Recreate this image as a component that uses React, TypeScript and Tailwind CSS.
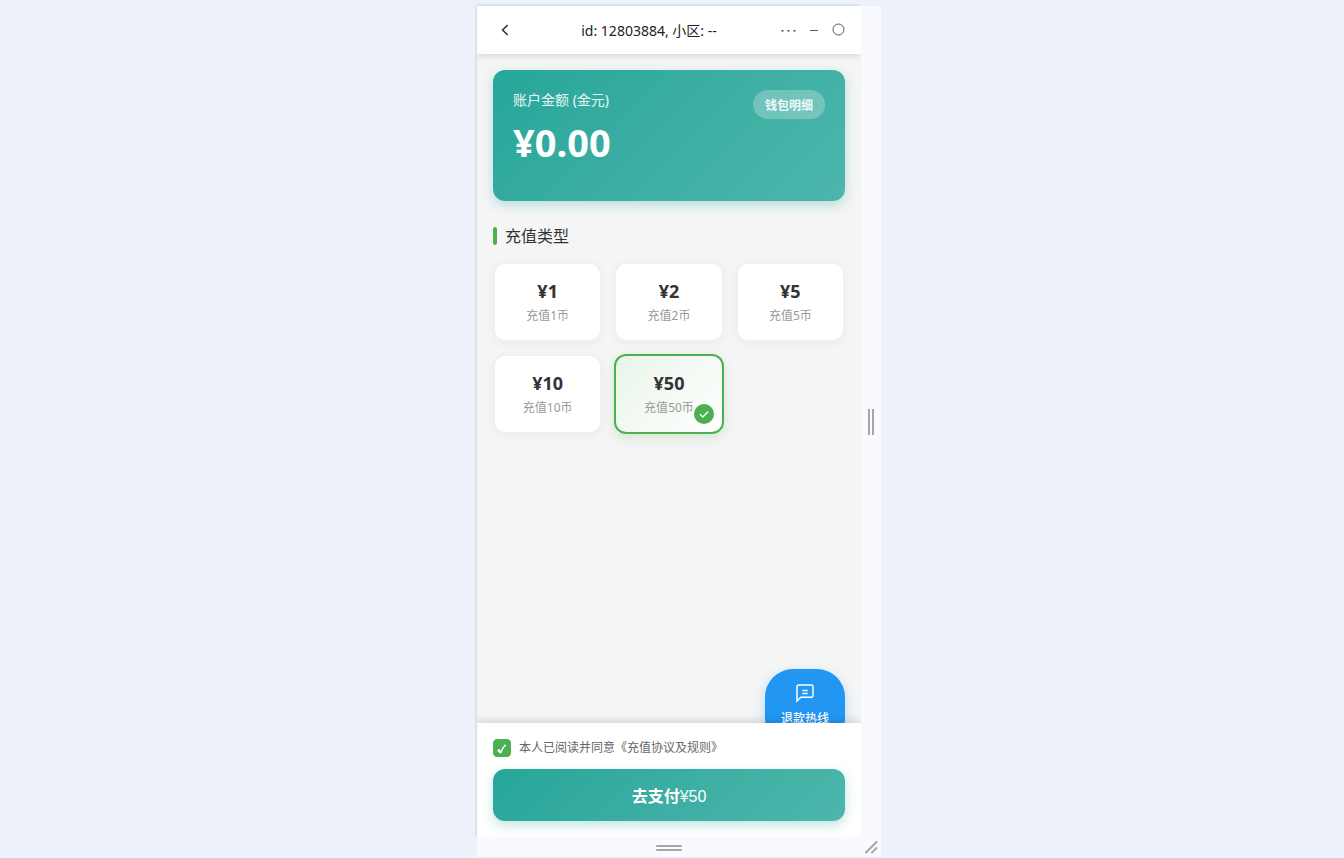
import { useState } from "react";

interface RechargeOption {
  price: number;
  coins: number;
}

const OPTIONS: RechargeOption[] = [
  { price: 1, coins: 1 },
  { price: 2, coins: 2 },
  { price: 5, coins: 5 },
  { price: 10, coins: 10 },
  { price: 50, coins: 50 },
];

function Header() {
  return (
    <header className="relative z-10 flex h-12 shrink-0 items-center justify-between bg-white px-4 shadow-[0_2px_6px_rgba(0,0,0,0.12)]">
      <button type="button" aria-label="返回" className="flex size-6 items-center justify-center text-[#333]">
        <svg viewBox="0 0 24 24" className="size-6" fill="none" stroke="currentColor" strokeWidth="1.6">
          <path d="M14.6 7 9.6 12l5 5" />
        </svg>
      </button>
      <h1 className="pt-0.5 text-sm leading-5 whitespace-nowrap text-[#222]">
        id: 12803884, 小区: --
      </h1>
      <div className="flex w-16 items-center justify-between text-[#555]">
        <button type="button" aria-label="更多">
          <svg viewBox="0 0 15 16" className="h-4 w-[15px]" fill="currentColor">
            <rect x="0.5" y="8" width="2" height="1.6" />
            <rect x="6.5" y="8" width="2" height="1.6" />
            <rect x="12.5" y="8" width="2" height="1.6" />
          </svg>
        </button>
        <button type="button" aria-label="最小化">
          <svg viewBox="0 0 8 16" className="h-4 w-2" fill="currentColor">
            <rect x="0" y="8" width="8" height="1" />
          </svg>
        </button>
        <button type="button" aria-label="关闭">
          <svg viewBox="0 0 13 16" className="h-4 w-[13px]" fill="none" stroke="currentColor">
            <circle cx="6.5" cy="7.5" r="5.5" />
          </svg>
        </button>
      </div>
    </header>
  );
}

function BalanceCard() {
  return (
    <section className="flex h-[131px] items-start justify-between rounded-xl bg-linear-135 from-[#26a69a] to-[#4db6ac] p-5 text-white shadow-[0_4px_12px_rgba(38,166,154,0.3)]">
      <div>
        <p className="text-sm leading-5 text-white/90">账户金额 (金元)</p>
        <p className="mt-2 text-[38px] leading-[48px] font-bold">¥0.00</p>
      </div>
      <button type="button" className="rounded-full bg-white/25 px-3 pt-[7px] pb-[5px] text-xs leading-[17px] font-semibold text-white/90">
        钱包明细
      </button>
    </section>
  );
}

interface OptionCardProps {
  option: RechargeOption;
  selected: boolean;
  onSelect: () => void;
}

function OptionCard({ option, selected, onSelect }: OptionCardProps) {
  return (
    <button
      type="button"
      aria-pressed={selected}
      onClick={onSelect}
      className={`relative flex h-20 flex-col items-center justify-center rounded-xl border-2 ${
        selected
          ? "border-[#4caf50] bg-linear-135 from-[#e8f5e9] to-white shadow-[0_4px_12px_rgba(76,175,80,0.2)]"
          : "border-[#f0f0f0] bg-white shadow-[0_2px_8px_rgba(0,0,0,0.04)]"
      }`}
    >
      <span className="text-lg leading-6 font-bold text-[#333]">¥{option.price}</span>
      <span className="mt-1 text-xs leading-[18px] text-[#999]">充值{option.coins}币</span>
      {selected && (
        <span className="absolute right-2 bottom-2 flex size-5 items-center justify-center rounded-full bg-[#4caf50]">
          <svg viewBox="0 0 20 20" className="size-5" fill="none" stroke="#fff" strokeWidth="1.4">
            <path d="m6 10.2 2.8 2.8 5.4-5.6" />
          </svg>
        </span>
      )}
    </button>
  );
}

function HotlineButton() {
  return (
    <button
      type="button"
      className="absolute right-4 -bottom-6 flex h-[78px] w-20 flex-col items-center rounded-[28px] bg-[#2196f3] pt-3.5 text-white shadow-[0_4px_12px_rgba(33,150,243,0.3)]"
    >
      <svg viewBox="0 0 20 20" className="size-5" fill="none" stroke="currentColor" strokeWidth="1.5">
        <path d="M2 18V3.6C2 2.6 2.6 2 3.6 2h12.8c1 0 1.6.6 1.6 1.6v9c0 1-.6 1.6-1.6 1.6H5.8Z" />
        <path d="M7.4 7.4h5.2M7.4 10.6h5.2" />
      </svg>
      <span className="mt-2 text-xs leading-4 font-medium">退款热线</span>
    </button>
  );
}

interface PayBarProps {
  price: number;
  agreed: boolean;
  onAgree: (agreed: boolean) => void;
}

function PayBar({ price, agreed, onAgree }: PayBarProps) {
  return (
    <footer className="relative z-10 shrink-0 bg-white p-4 shadow-[0_-2px_8px_rgba(0,0,0,0.15)]">
      <div className="flex items-center gap-2 text-xs leading-[18px] text-[#666]">
        <span className="relative flex size-[18px]">
          <input
            id="agree"
            type="checkbox"
            checked={agreed}
            onChange={(e) => onAgree(e.target.checked)}
            className="size-[18px] appearance-none rounded border border-gray-300 bg-white checked:border-[#4caf50] checked:bg-[#4caf50]"
          />
          {agreed && (
            <svg viewBox="0 0 18 18" className="pointer-events-none absolute inset-0 size-[18px]" fill="none" stroke="#fff">
              <path d="m5 10.6 2.8 3.2" strokeWidth="2.4" />
              <path d="M7.6 14c1-3 2.6-5.8 5-8.2" strokeWidth="1.5" />
            </svg>
          )}
        </span>
        <label htmlFor="agree">本人已阅读并同意《充值协议及规则》</label>
      </div>
      <button
        type="button"
        disabled={!agreed}
        className="mt-3 h-13 w-full rounded-xl bg-linear-135 from-[#26a69a] to-[#4db6ac] pt-1 font-['Liberation_Sans','Noto_Sans_CJK_SC',sans-serif] text-base text-white shadow-[0_4px_12px_rgba(38,166,154,0.3)] disabled:opacity-50"
      >
        <span className="font-bold">去支付</span>¥{price}
      </button>
    </footer>
  );
}

export default function App() {
  const [selected, setSelected] = useState(4);
  const [agreed, setAgreed] = useState(true);

  return (
    <div className="flex h-screen justify-center bg-[#ecf1fa] pt-1.5 pb-px pl-3.5 font-['Noto_Sans','Noto_Sans_CJK_SC',sans-serif]">
      <div className="grid w-full max-w-[404px] grid-cols-[1fr_20px] grid-rows-[1fr_20px] bg-[#f8faff]">
        <div className="flex min-h-0 flex-col overflow-hidden bg-[#f5f5f5] shadow-[-1px_-1px_2px_rgba(0,0,0,0.12)]">
          <Header />
          <main className="relative min-h-0 flex-1 p-4">
            <BalanceCard />
            <h2 className="mt-6 flex items-center gap-2 text-base leading-[22px] text-[#333]">
              <span className="h-[18px] w-1 rounded-xs bg-[#4caf50]" />
              充值类型
            </h2>
            <div className="mt-[15px] grid grid-cols-3 gap-3">
              {OPTIONS.map((option, index) => (
                <OptionCard
                  key={option.price}
                  option={option}
                  selected={index === selected}
                  onSelect={() => setSelected(index)}
                />
              ))}
            </div>
            <HotlineButton />
          </main>
          <PayBar price={OPTIONS[selected].price} agreed={agreed} onAgree={setAgreed} />
        </div>

        {/* resize handles around the device */}
        <div className="flex cursor-ew-resize items-center justify-center gap-0.5">
          <span className="h-[26px] w-0.5 bg-[#a6a6a6]" />
          <span className="h-[26px] w-0.5 bg-[#a6a6a6]" />
        </div>
        <div className="flex cursor-ns-resize flex-col items-center justify-center gap-0.5 pt-0.5">
          <span className="h-0.5 w-[26px] rounded-full bg-[#a6a6a6]" />
          <span className="h-0.5 w-[26px] rounded-full bg-[#a6a6a6]" />
        </div>
        <div className="flex cursor-nwse-resize items-center justify-center">
          <svg viewBox="0 0 20 20" className="size-5" fill="none" stroke="#a6a6a6" strokeWidth="2">
            <path d="M5 15.5 15.5 5M11 15.5l4.5-4.5" strokeLinecap="round" />
          </svg>
        </div>
      </div>
    </div>
  );
}
